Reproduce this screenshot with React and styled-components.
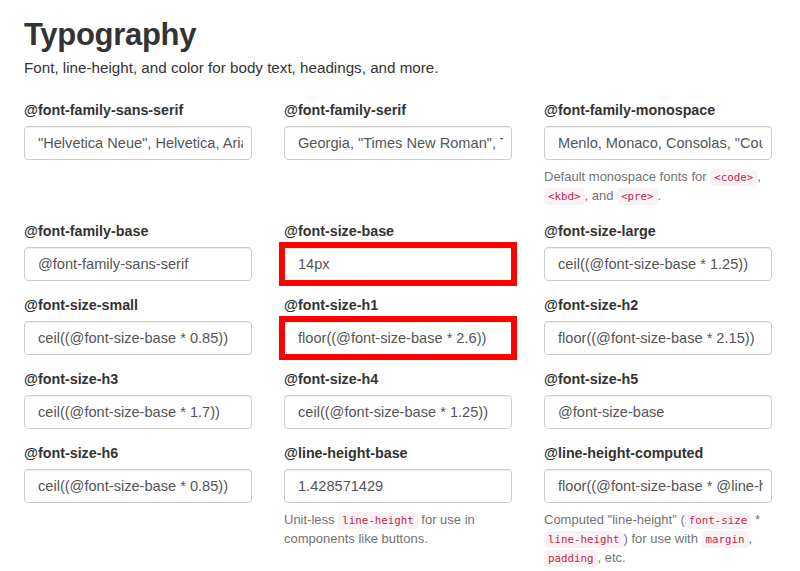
import React from "react";
import styled, { createGlobalStyle } from "styled-components";

const GlobalStyle = createGlobalStyle`
  html, body {
    margin: 0;
    padding: 0;
    background: #fff;
  }
  body {
    font-family: "Liberation Sans", Arial, sans-serif;
    font-size: 14px;
    line-height: 1.428571429;
    color: #333;
  }
`;

const Page = styled.div`
  padding: 15px 28px 20px 24px;
`;

const Title = styled.h1`
  margin: 0;
  font-size: 31px;
  font-weight: bold;
  line-height: 40px;
  color: #333;
  letter-spacing: -0.3px;
`;

const Lead = styled.p`
  margin: 3px 0 22px 0;
  font-size: 15.2px;
  line-height: 20px;
  color: #333;
`;

const Row = styled.div`
  display: grid;
  grid-template-columns: repeat(3, 228px);
  column-gap: 32px;
  align-items: start;
`;

const Group = styled.div`
  margin-bottom: 14px;
`;

const Label = styled.label`
  display: block;
  margin-bottom: 6px;
  font-weight: bold;
  font-size: 14.3px;
  line-height: 20px;
  color: #333;
`;

const Input = styled.input`
  display: block;
  box-sizing: border-box;
  width: 100%;
  height: 34px;
  padding: 6px 8px 6px 13px;
  font-family: "Liberation Sans", Arial, sans-serif;
  font-size: 14.6px;
  color: #555;
  background: #fff;
  border: 1px solid #ccc;
  border-radius: ${p => (p.$marked ? "0" : "4px")};
  box-shadow: inset 0 1px 1px rgba(0, 0, 0, 0.075);
  outline: ${p => (p.$marked ? "6px solid #f00" : "none")};
  outline-offset: -1px;
`;

const Help = styled.p`
  margin: 7px 0 2px 0;
  font-size: 13px;
  line-height: 19px;
  color: #737373;
`;

const Code = styled.code`
  padding: 2px 4px;
  font-family: "DejaVu Sans Mono", Menlo, monospace;
  font-size: 10.8px;
  line-height: 1;
  color: #c7254e;
  background: #f9f2f4;
  border-radius: 4px;
`;

const fields = [
  [
    { name: "@font-family-sans-serif", value: '"Helvetica Neue", Helvetica, Arial, sans-serif' },
    { name: "@font-family-serif", value: 'Georgia, "Times New Roman", Times, serif' },
    {
      name: "@font-family-monospace",
      value: 'Menlo, Monaco, Consolas, "Courier New", monospace',
      help: (
        <>
          Default monospace fonts for <Code>&lt;code&gt;</Code>, <Code>&lt;kbd&gt;</Code>, and{" "}
          <Code>&lt;pre&gt;</Code>.
        </>
      ),
    },
  ],
  [
    { name: "@font-family-base", value: "@font-family-sans-serif" },
    { name: "@font-size-base", value: "14px", marked: true },
    { name: "@font-size-large", value: "ceil((@font-size-base * 1.25))" },
  ],
  [
    { name: "@font-size-small", value: "ceil((@font-size-base * 0.85))" },
    { name: "@font-size-h1", value: "floor((@font-size-base * 2.6))", marked: true },
    { name: "@font-size-h2", value: "floor((@font-size-base * 2.15))" },
  ],
  [
    { name: "@font-size-h3", value: "ceil((@font-size-base * 1.7))" },
    { name: "@font-size-h4", value: "ceil((@font-size-base * 1.25))" },
    { name: "@font-size-h5", value: "@font-size-base" },
  ],
  [
    { name: "@font-size-h6", value: "ceil((@font-size-base * 0.85))" },
    {
      name: "@line-height-base",
      value: "1.428571429",
      help: (
        <>
          Unit-less <Code>line-height</Code> for use in components like buttons.
        </>
      ),
    },
    {
      name: "@line-height-computed",
      value: "floor((@font-size-base * @line-height-base))",
      help: (
        <>
          Computed "line-height" (<Code>font-size</Code> * <Code>line-height</Code>) for use with{" "}
          <Code>margin</Code>, <Code>padding</Code>, etc.
        </>
      ),
    },
  ],
];

function App() {
  return (
    <Page>
      <GlobalStyle />
      <Title>Typography</Title>
      <Lead>Font, line-height, and color for body text, headings, and more.</Lead>
      {fields.map((row, i) => (
        <Row key={i}>
          {row.map(field => (
            <Group key={field.name}>
              <Label>{field.name}</Label>
              <Input readOnly defaultValue={field.value} $marked={field.marked} />
              {field.help && <Help>{field.help}</Help>}
            </Group>
          ))}
        </Row>
      ))}
    </Page>
  );
}

export default App;
